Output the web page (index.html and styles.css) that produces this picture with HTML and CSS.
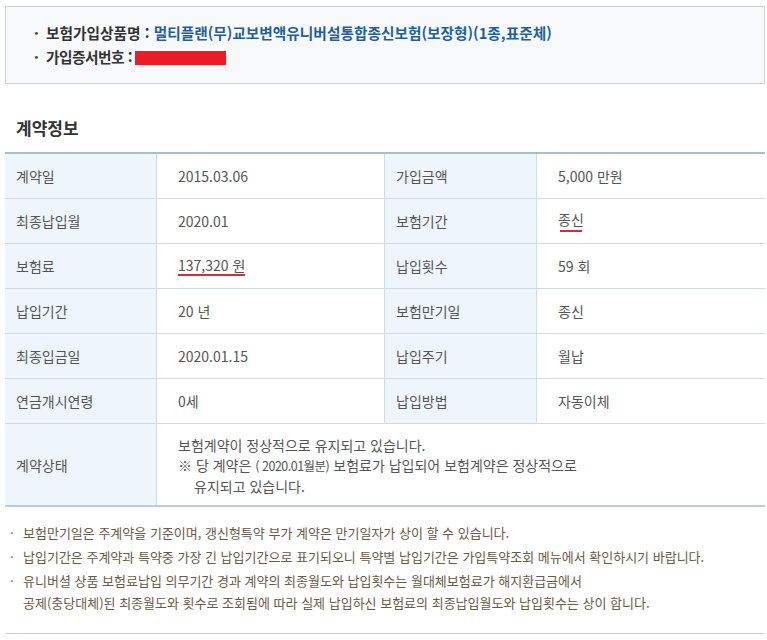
FILE: index.html
```html
<!DOCTYPE html>
<html lang="ko">
<head>
<meta charset="utf-8">
<link rel="stylesheet" href="styles.css">
</head>
<body>
<div class="page">
  <div class="product-box">
    <ul class="product-list">
      <li><span class="pl-label">보험가입상품명 :</span> <span class="pl-value">멀티플랜(무)교보변액유니버설통합종신보험(보장형)(1종,표준체)</span></li>
      <li><span class="pl-label pl-tight">가입증서번호 :</span> <span class="redact"></span></li>
    </ul>
  </div>

  <h2 class="section-title">계약정보</h2>

  <div class="info-grid">
    <div class="th">계약일</div><div class="td">2015.03.06</div>
    <div class="th">가입금액</div><div class="td last">5,000 만원</div>

    <div class="th">최종납입월</div><div class="td">2020.01</div>
    <div class="th">보험기간</div><div class="td last"><span class="mark mark-short">종신</span></div>

    <div class="th">보험료</div><div class="td"><span class="mark">137,320 원</span></div>
    <div class="th">납입횟수</div><div class="td last">59 회</div>

    <div class="th">납입기간</div><div class="td">20 년</div>
    <div class="th">보험만기일</div><div class="td last">종신</div>

    <div class="th">최종입금일</div><div class="td">2020.01.15</div>
    <div class="th">납입주기</div><div class="td last">월납</div>

    <div class="th">연금개시연령</div><div class="td">0세</div>
    <div class="th">납입방법</div><div class="td last">자동이체</div>

    <div class="th th-status">계약상태</div>
    <div class="td td-status">
      <p>보험계약이 정상적으로 유지되고 있습니다.</p>
      <p class="hang">※ 당 계약은 <span class="small">( 2020.01월분)</span> 보험료가 납입되어 보험계약은 정상적으로<br>유지되고 있습니다.</p>
    </div>
  </div>

  <ul class="notes">
    <li>보험만기일은 주계약을 기준이며, 갱신형특약 부가 계약은 만기일자가 상이 할 수 있습니다.</li>
    <li>납입기간은 주계약과 특약중 가장 긴 납입기간으로 표기되오니 특약별 납입기간은 가입특약조회 메뉴에서 확인하시기 바랍니다.</li>
    <li>유니버셜 상품 보험료납입 의무기간 경과 계약의 최종월도와 납입횟수는 월대체보험료가 해지환급금에서<br>공제(충당대체)된 최종월도와 횟수로 조회됨에 따라 실제 납입하신 보험료의 최종납입월도와 납입횟수는 상이 합니다.</li>
  </ul>
</div>
</body>
</html>
```

FILE: styles.css
```css
* { box-sizing: border-box; }
html, body { margin: 0; padding: 0; background: #fff; }
body {
  font-family: "Noto Sans CJK KR", "Noto Sans", sans-serif;
  color: #555;
}
.page {
  width: 767px;
  padding: 6px 2px 0 5px;
}
.product-box {
  height: 78px;
  border: 1px solid #cdd3db;
  background: #f8f9fb;
  padding: 14px 0 0 26px;
}
.product-list {
  list-style: none;
  margin: 0;
  padding: 0;
}
.product-list li {
  position: relative;
  padding-left: 14px;
  font-size: 14.7px;
  line-height: 24px;
  font-weight: 700;
  color: #333;
  white-space: nowrap;
}
.product-list li::before {
  content: "·";
  position: absolute;
  left: 2px;
  top: 0;
  color: #444;
}
.pl-label { color: #333; }
.pl-tight { letter-spacing: -0.5px; }
.pl-value { color: #1f5f9e; }
.redact {
  display: inline-block;
  width: 91px;
  height: 14px;
  background: #ed1c24;
  vertical-align: -2px;
  margin-left: -1px;
}
.section-title {
  margin: 32px 0 12px 11px;
  font-size: 17px;
  line-height: 24px;
  font-weight: 700;
  color: #333;
}
.info-grid {
  display: grid;
  grid-template-columns: 152px 228px 152px 228px;
  border-top: 2px solid #a9bfcd;
  border-bottom: 2px solid #bccbd6;
  font-size: 14px;
  color: #555;
}
.th, .td {
  height: 45px;
  display: flex;
  align-items: center;
  border-bottom: 1px solid #cfdce6;
}
.th {
  background: #eef5fb;
  border-right: 1px solid #cfdce6;
  padding-left: 11px;
  color: #555;
}
.td {
  padding-left: 21px;
  border-right: 1px solid #cfdce6;
}
.td.last { border-right: none; }
.th-status, .td-status {
  height: 81px;
  border-bottom: none;
}
.td-status {
  grid-column: 2 / 5;
  border-right: none;
  flex-direction: column;
  align-items: flex-start;
  justify-content: center;
  padding-top: 1px;
}
.td-status p {
  margin: 0;
  line-height: 20px;
}
.hang {
  padding-left: 16px;
  text-indent: -16px;
}
.small {
  font-size: 12.5px;
  letter-spacing: -0.5px;
}
.mark {
  display: inline-block;
  line-height: 18px;
  padding-bottom: 2px;
  background: linear-gradient(#c8323a, #c8323a) no-repeat left bottom / 100% 2px;
}
.mark-short {
  padding-bottom: 4px;
  background-position: center bottom;
  background-size: 22px 2px;
}
.notes {
  list-style: none;
  margin: 0;
  padding: 15px 0 19px 0;
  border-bottom: 1px solid #c8d4de;
  font-size: 13px;
  color: #6a5a48;
}
.notes li {
  position: relative;
  padding-left: 18px;
  line-height: 22px;
  margin-bottom: 2px;
  white-space: nowrap;
}
.notes li:last-child { margin-bottom: 0; }
.notes li::before {
  content: "·";
  position: absolute;
  left: 5px;
  top: 0;
}
```
